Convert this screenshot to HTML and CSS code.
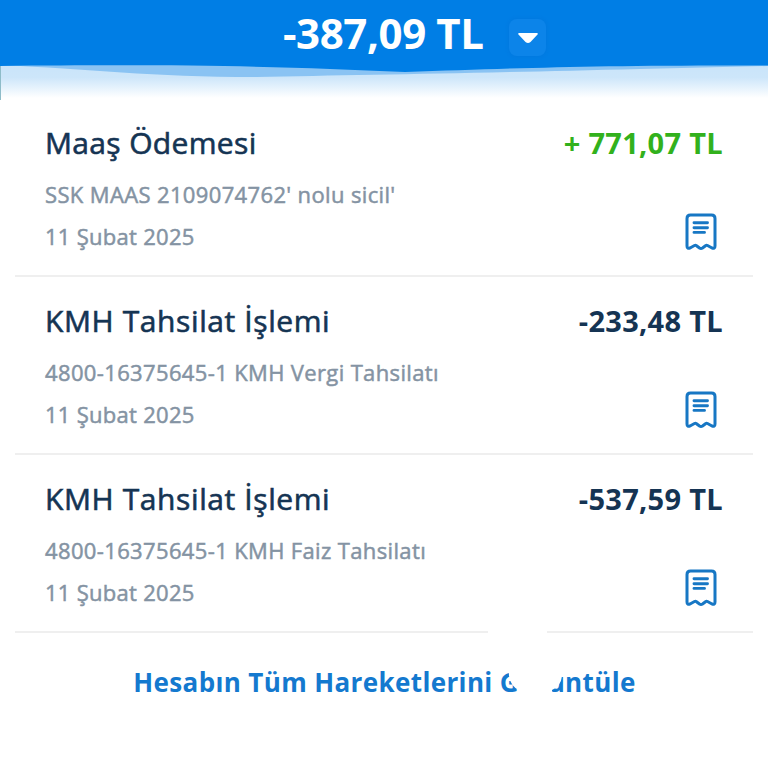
FILE: index.html
```
<!DOCTYPE html>
<html lang="tr">
<head>
    <meta charset="UTF-8">
    <meta name="viewport" content="width=device-width, initial-scale=1.0">
    <title>Hesap Hareketleri</title>
    <link rel="stylesheet" href="styles.css">
</head>
<body>
    <!-- receipt icon, used in every row -->
    <svg class="sprite" width="0" height="0">
        <symbol id="receipt" viewBox="0 0 32 38">
            <path d="M2 33V5.500Q2 2 5.500 2H26.500Q30 2 30 5.500V33Q30 35.800 27 35L22.500 32.500Q21.500 32 20.500 32.700L17.500 35Q16 36 14.500 35L11.500 32.700Q10.500 32 9.500 32.500L5 35Q2 35.800 2 33Z" fill="none" stroke="#1777c4" stroke-width="3" stroke-linejoin="round"/>
            <path d="M9 9.800H22.500M9 14.700H22.500M9 19.400H19.500" fill="none" stroke="#1777c4" stroke-width="2.900" stroke-linecap="round"/>
        </symbol>
    </svg>

    <header class="balance">
        <svg class="wave" viewBox="0 0 768 44" width="768" height="44">
            <defs>
                <linearGradient id="fade" x1="0" y1="0" x2="0" y2="1">
                    <stop offset="0" stop-color="#c9e4fa"/>
                    <stop offset="0.400" stop-color="#cde6fa"/>
                    <stop offset="1" stop-color="#ffffff"/>
                </linearGradient>
            </defs>
            <rect x="0" y="4" width="768" height="34" fill="url(#fade)"/>
            <path d="M0 5C90 9 150 17 256 17C360 15 480 13 640 9L768 6V0H0Z" fill="#8ac3f3"/>
            <path d="M0 6C200 4 290 7 405 12C520 8 600 5 768 5.500V0H0Z" fill="#007ee5"/>
            <rect x="0" y="6" width="1" height="34" fill="#8ebcc9"/>
        </svg>
        <span class="amount-total">-387,09 TL</span>
        <span class="toggle">
            <svg width="22" height="12" viewBox="0 0 22 12"><path d="M2 1H20Q21.500 1 20.500 2.500L13.500 10Q11 12 8.500 10L1.500 2.500Q.5 1 2 1Z" fill="#fff"/></svg>
        </span>
    </header>

    <main class="list">
        <section class="item">
            <div class="row">
                <h2 class="title title-salary">Maaş Ödemesi</h2>
                <span class="amount plus">+ 771,07 TL</span>
            </div>
            <p class="detail">SSK MAAS 2109074762' nolu sicil'</p>
            <div class="row">
                <p class="date">11 Şubat 2025</p>
                <svg class="receipt"><use href="#receipt"/></svg>
            </div>
        </section>
        <section class="item">
            <div class="row">
                <h2 class="title">KMH Tahsilat İşlemi</h2>
                <span class="amount">-233,48 TL</span>
            </div>
            <p class="detail">4800-16375645-1 KMH Vergi Tahsilatı</p>
            <div class="row">
                <p class="date">11 Şubat 2025</p>
                <svg class="receipt"><use href="#receipt"/></svg>
            </div>
        </section>
        <section class="item">
            <div class="row">
                <h2 class="title">KMH Tahsilat İşlemi</h2>
                <span class="amount">-537,59 TL</span>
            </div>
            <p class="detail">4800-16375645-1 KMH Faiz Tahsilatı</p>
            <div class="row">
                <p class="date">11 Şubat 2025</p>
                <svg class="receipt"><use href="#receipt"/></svg>
            </div>
        </section>
    </main>

    <footer class="more">
        <a class="more-link">Hesabın Tüm Hareketlerini Görüntüle</a>
        <!-- white spot over the divider and the link -->
        <svg class="spot" viewBox="0 0 80 72" width="80" height="72">
            <path d="M3 0H62V10H78L77 48Q76 58 67 62V70H34V62Q26 59 24 48L22 10H3Z" fill="#fff"/>
        </svg>
    </footer>
</body>
</html>
```
FILE: styles.css
```
* {
    box-sizing: border-box;
}
body {
    margin: 0;
    width: 768px;
    height: 768px;
    overflow: hidden;
    background: #fff;
    font-family: "Open Sans", "Noto Sans", sans-serif;
    color: #153453;
}
.sprite {
    position: absolute;
}
.balance {
    position: relative;
    display: flex;
    height: 66px;
    padding-left: 283px;
    background: #007ee5;
    color: #fff;
}
.wave {
    position: absolute;
    left: 0;
    top: 60px;
}
.amount-total {
    position: relative;
    width: 226px;
    font-size: 42px;
    font-weight: 700;
    line-height: 66px;
    letter-spacing: -0.4px;
    white-space: nowrap;
}
.toggle {
    display: flex;
    align-items: center;
    justify-content: center;
    position: relative;
    width: 37px;
    height: 37px;
    margin-top: 19px;
    border-radius: 8px;
    background: #0c84e9;
    box-shadow: 0 0 4px rgba(0, 90, 190, 0.2);
}

/* transactions */
.list {
    padding: 33px 15px 0;
}
.item {
    height: 178px;
    padding: 22px 30px 0;
    border-bottom: 2px solid #efefef;
}
.row {
    display: flex;
    justify-content: space-between;
}
.title {
    margin: 0;
    font-size: 30px;
    font-weight: 400;
    line-height: 44px;
    letter-spacing: 0.6px;
    -webkit-text-stroke: 0.6px #153453;
}
.title-salary {
    letter-spacing: 0.35px;
}
.amount {
    font-size: 29px;
    font-weight: 700;
    line-height: 44px;
    letter-spacing: 0.3px;
}
.plus {
    color: #32b11c;
}
.detail,
.date {
    font-size: 22px;
    font-weight: 400;
    line-height: 32px;
    letter-spacing: 0.36px;
    color: #8493a3;
    -webkit-text-stroke: 0.5px #8493a3;
}
.detail {
    margin: 13px 0 0;
}
.date {
    margin: 10px 0 0;
    letter-spacing: 0.28px;
}
.receipt {
    width: 32px;
    height: 38px;
    margin: 3px 6px 0 0;
}

.more {
    position: relative;
    padding: 30px 0 0 1px;
    text-align: center;
}
.more-link {
    font-size: 26px;
    font-weight: 700;
    line-height: 38px;
    letter-spacing: 0.37px;
    white-space: nowrap;
    color: #1479cf;
}
.spot {
    position: absolute;
    left: 485px;
    top: -5px;
}
```
